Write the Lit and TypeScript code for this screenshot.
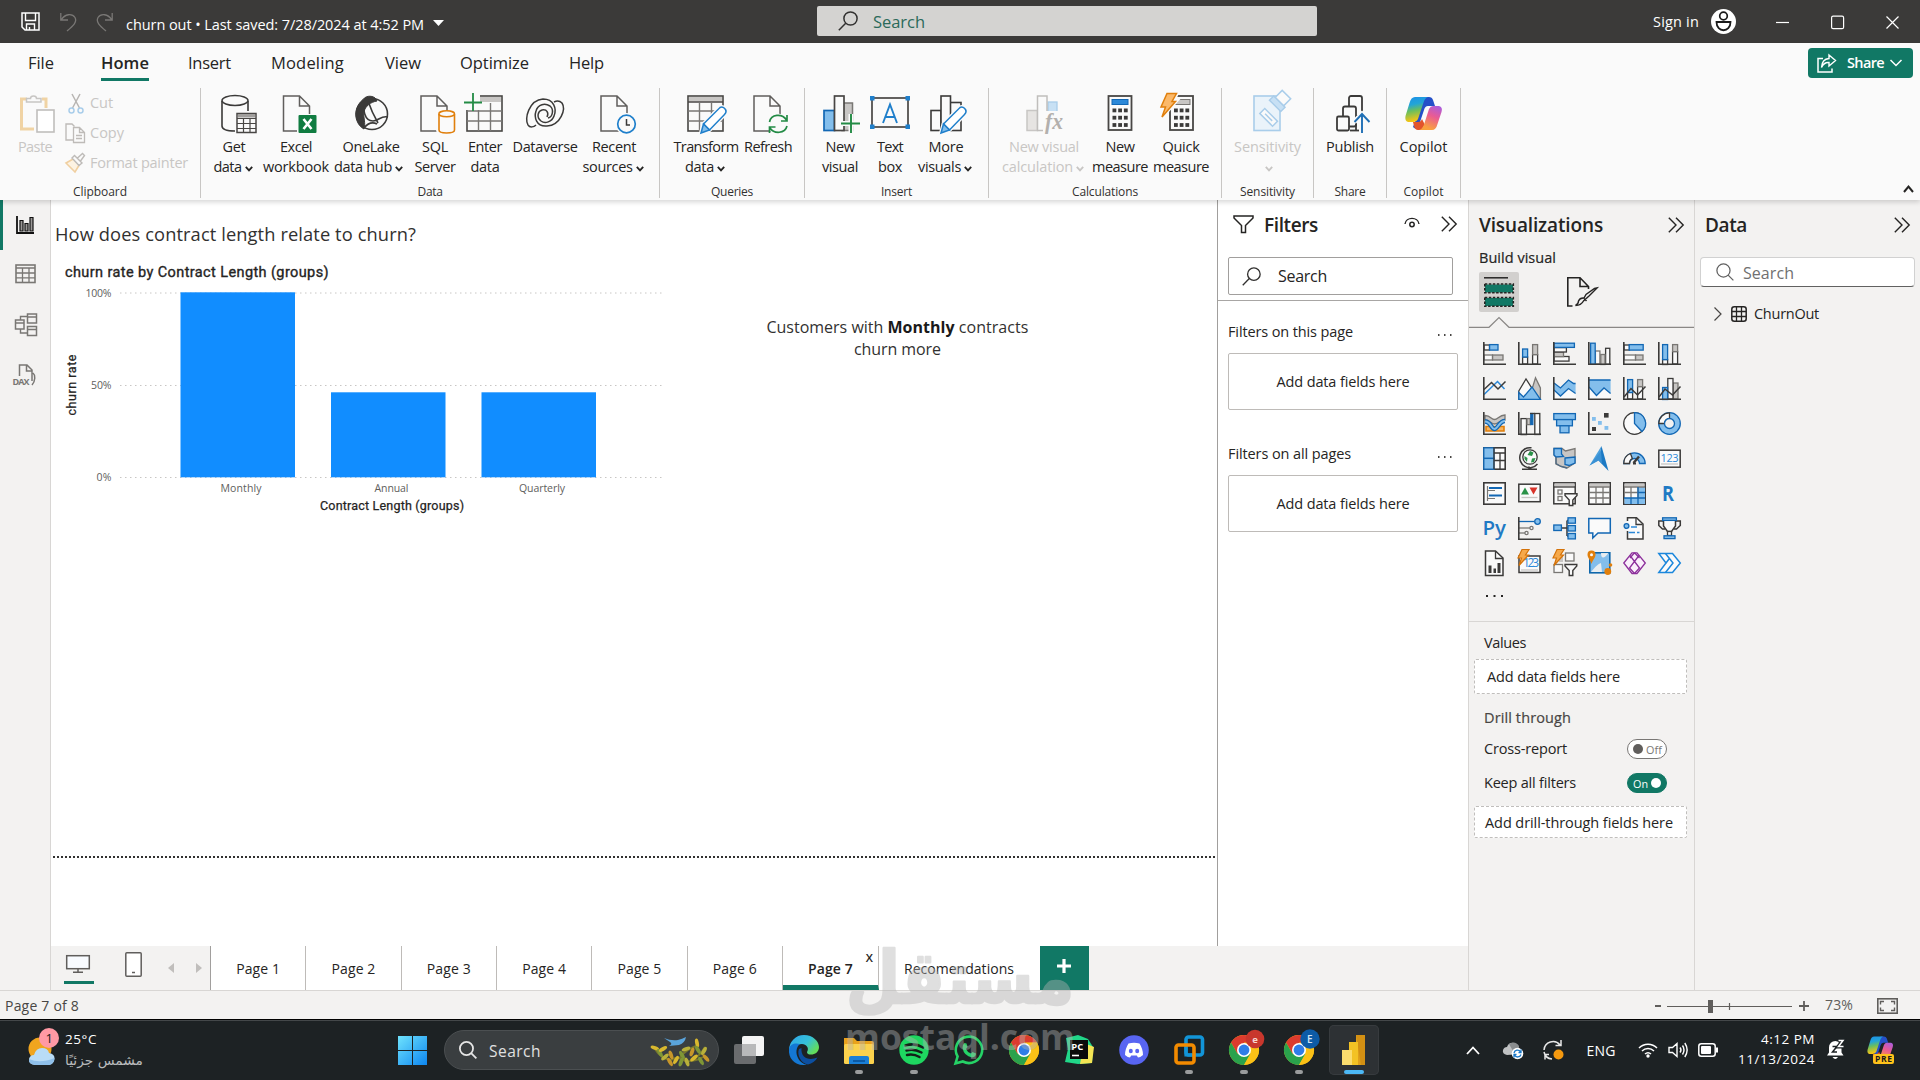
import { LitElement, html, svg, css, nothing } from "lit";
import { customElement, property } from "lit/decorators.js";

/** One line of text whose tracking is adjusted so that it fills a given width. */
@customElement("fit-text")
class FitText extends LitElement {
  @property({ type: Number }) w = 0;
  static styles = css`
    :host { display: inline-block; white-space: pre; }
  `;
  render() {
    return html`<slot></slot>`;
  }
  firstUpdated() {
    const n = (this.textContent ?? "").length;
    if (!this.w || !n) return;
    const natural = this.getBoundingClientRect().width;
    this.style.letterSpacing = `${((this.w - natural) / n).toFixed(3)}px`;
  }
}

const B = "#1267b4", b = "#83beec", D = "#3b3a39", G = "#797774", g = "#c8c6c4", W = "#fafafa", O = "#e07f0c";

const r = (x: number, y: number, w: number, h: number, fill = "none", stroke = "none", sw = 1.3) =>
  svg`<rect x=${x} y=${y} width=${w} height=${h} fill=${fill} stroke=${stroke} stroke-width=${sw} />`;
const p = (d: string, stroke = D, fill = "none", sw = 1.3) =>
  svg`<path d=${d} fill=${fill} stroke=${stroke} stroke-width=${sw} />`;
const c = (x: number, y: number, rad: number, fill = "none", stroke = "none", sw = 1.3) =>
  svg`<circle cx=${x} cy=${y} r=${rad} fill=${fill} stroke=${stroke} stroke-width=${sw} />`;
const icon = (w: number, h: number, body: unknown, cls = "") =>
  html`<svg class="ic ${cls}" width=${w} height=${h} viewBox="0 0 ${w} ${h}">${body}</svg>`;

const t = (text: string, w = 0, cls = "") => html`<fit-text class=${cls} .w=${w}>${text}</fit-text>`;

const axis = p("M.8 0V22.2H23", D, "none", 1.6);

/* ---------- visual gallery, 23 x 23 each ---------- */
const bolt = () => svg`<path d="M4 -2.500H11L7.500 3H10.500L1 13.500L3.500 6H0Z" fill="#f6a94a" stroke="#d4730a" stroke-width="1.200"/>`;
const visuals = [
  svg`${r(1, 3, 5.5, 5, W, D)}${r(6.6, 2.6, 8.4, 5.5, b, B)}${r(1, 13, 8.5, 5, W, G)}${r(9.6, 13, 10.4, 5, g, G)}${axis}`,
  svg`${r(4.6, 15, 5, 7, W, D)}${r(4.6, 7, 5, 8, b, B)}${r(14.6, 12.5, 5, 9.5, W, D)}${r(14.6, 2.6, 5, 10, g, G)}${axis}`,
  svg`${r(1, 14.5, 15, 4.6, W, D)}${r(1, 10, 9.5, 4.6, g, G)}${r(1, 5.6, 12.4, 4.4, W, D)}${r(1, 1.2, 20.4, 4.2, b, B)}${axis}`,
  svg`${r(17.6, 6.3, 4.2, 16, W, D)}${r(12.8, 12.5, 4.2, 10, g, G)}${r(7.4, 9, 4.5, 13, W, G)}${r(2.6, 1.2, 4.6, 21, b, B)}${axis}`,
  svg`${r(1, 3, 5.5, 5, W, D)}${r(6.2, 2.6, 14, 5.5, b, B)}${r(1, 13, 11.5, 5, W, G)}${r(12.6, 13, 7.4, 5, g, G)}${axis}`,
  svg`${r(4.6, 17.5, 5, 5, W, D)}${r(4.6, 2.6, 5, 15, b, B)}${r(14.6, 9.5, 5, 12.5, W, D)}${r(14.6, 2.6, 5, 7, g, G)}${axis}`,
  svg`${p("M1 17.500L14.500 4.500L21.500 12", "#2b88d8", "none", 1.5)}${p("M1 12.500L8.500 5.500L15 12L22.500 4.500", D, "none", 1.5)}${axis}`,
  svg`${p("M11 22L17.500 0.800L22.400 11V22Z", G, g)}${p("M.8 14L8 2L15 13L8 22H.8Z", D, W)}${p("M.8 15.500L5.500 20L14 10L22.400 22.300H.8Z", B, b)}`,
  svg`<path d="M1 22V14L7.500 19L16 12L22.500 16V22Z" fill="#fafafa"/>${p("M1 6L7.500 11L15.500 3L22.600 7V16L15.500 11.500L7.500 19L1 13Z", "none", b)}${p("M1 6L7.500 11L15.500 3L20.500 6.500H22.600M1 13L7.500 19L15.500 11.500L22.600 16.500", B)}${axis}`,
  svg`<path d="M1 22V8L8.500 18L16 11L22.500 16V22Z" fill="#fafafa"/>${p("M1 3H22.600V16L16 11L8.500 18.500L1 10Z", "none", b)}${p("M1 3H22.600M1 10L8.500 18.500L16 11L22.600 16.500", B)}${axis}`,
  svg`${r(4.6, 15, 5, 7, W, D)}${r(4.6, 2.6, 5, 13, b, B)}${r(14.6, 9.5, 5, 12.5, W, D)}${r(14.6, 2.6, 5, 7, g, G)}${p("M1 20L8 11.500L14.500 18L22.500 9.500", D, "none", 1.5)}${axis}`,
  svg`${r(15, 6, 5, 16, g, G)}${r(9.8, 1.5, 5.2, 20.5, W, D)}${r(4.6, 10.5, 5, 12, b, B)}${p("M1 20L7 12L14.500 18L22.500 9.500", D, "none", 1.5)}${axis}`,
  svg`${p("M3 14.500H21V19H3Z", O, "#f7b35e", 1.6)}${p("M2 3.500C8 3.500 8 7.500 11.500 7.500S16 3 22 3V8C17 8 15 12 11.500 12S7 8 2 8Z", G, g)}${p("M2 9.500C8 9.500 8 17 11.500 17S16 9 22 9", B, "none", 4.5)}${p("M2 9.500C8 9.500 8 17 11.500 17S16 9 22 9", b, "none", 2)}${axis}`,
  svg`${r(3, 6.6, 5.5, 16, W, D)}${r(9, 6.6, 3.2, 6, g, G)}${r(12.8, 1.5, 2, 11, B, B)}${r(16.8, 1.5, 5, 21, W, D)}${p("M12 1.500H17", D)}${axis}`,
  svg`${r(0.8, 1.6, 21.6, 6, b, B)}${r(3.6, 7.6, 15.8, 6.2, b, B)}${r(7, 13.8, 9, 7, b, B)}`,
  svg`${r(16, 1, 4.6, 4.6, D)}${r(4, 5, 3.8, 3.8, b)}${r(10, 9, 3.8, 3.8, b)}${r(16.5, 14, 3.8, 3.8, b)}${r(4, 15, 4, 4, D)}${axis}`,
  svg`${c(11.5, 11.5, 10.8, W, D)}${p("M11.500 11.500V.7A10.800 10.800 0 0 1 19 19.500Z", B, b)}`,
  svg`${c(11.5, 11.5, 10.8, b, B)}${p("M.8 11.500A10.800 10.800 0 0 1 11.500 .8V6.500A5 5 0 0 0 6.500 11.500Z", D, W)}${c(11.5, 11.5, 5, "#f3f2f1", B)}`,
  svg`${r(0.8, 0.8, 21.4, 21.4, W, D, 1.6)}${r(0.8, 0.8, 10.2, 10.6, b, B)}${r(0.8, 11.4, 10.2, 10.8, b, B)}${p("M11 6H22M17 6V22M11 13.500H17M17 13.500H22M11 0V22", D)}`,
  svg`${p("M13.500 .8A10 10 0 1 0 19.500 17M11 19.500V22M4 22.200H19", D, "none", 1.5)}${c(12, 10, 7.2, W, D)}<path d="M12 4L15.500 5.500L14 9L9.500 8ZM6.500 9L9.500 11L9 15L6.500 12ZM14 11.500L17.500 11L16 15L13 15.500Z" fill="#2a9248"/>`,
  svg`${p("M1 1.500H9L12.500 4L22 1.500V16L14 21L8 19.500L3 17V10L1 8Z", G, g)}${p("M1 1.500H8.500V7L10.500 9.500L3 10L1 8Z", B, b)}${p("M12 11L22 10V16L16 18.500L12 17.500Z", B, b)}${p("M3 10V16.500L8 19.500L14 21", "#4f6c86")}`,
  svg`<path d="M13.500 -1L1.500 18.500L10.500 13.500Z" fill="#4ba0dd"/><path d="M13.500 -1L20.500 24L10.500 13.500Z" fill="#1b79c4"/><path d="M1.500 18.500L10.500 13.500L14 16.500L13 4Z" fill="#3a91d4"/>`,
  svg`${p("M.8 16.500A10.700 10.700 0 0 1 22.200 16.500H16.500A5 5 0 0 0 6.500 16.500Z", B, b)}${p("M.8 16.500A10.700 10.700 0 0 1 7.500 6.500L9.300 11.500A5.500 5.500 0 0 0 6.500 16.500Z", D, W)}${p("M10.500 16L16 9.500", D, "none", 2.4)}${p("M10 16.500H13", D, "none", 2)}`,
  svg`${r(0.8, 3.2, 21.4, 17, W, D, 1.5)}<text x="2.600" y="14.500" font-size="11" font-weight="500" textLength="18" class="num">123</text>${p("M3 17H20", g)}`,
  svg`${r(0.8, 0.8, 21.4, 21.4, W, D, 1.6)}${p("M4.500 4V19M5 8.500H12M5 16.500H12", G, "none", 1.2)}${p("M6 6H19M6 13.500H19", B, "none", 2)}`,
  svg`${r(0.8, 2.2, 21.4, 17.5, W, D, 1.5)}<path d="M3 12.500L7 5.500L11 12.500Z" fill="#2a9248"/><path d="M11.500 5.500H19.500L15.500 12.500Z" fill="#d9342b"/>${p("M3.500 15.500H19.500", g)}`,
  svg`${r(0.8, 0.8, 21.4, 21, W, D, 1.5)}${r(1.5, 1.5, 20, 3, g)}${p("M1 5H22", D)}${r(5, 8, 4, 4, W, G)}${r(5, 14.5, 4, 4, W, G)}${p("M12 11.800H24V13.500L19.800 18V23.500H16.200V18L12 13.500Z", D, W, 1.4)}`,
  svg`${r(0.8, 0.8, 21.4, 21.4, W, D, 1.6)}${r(1.5, 1.5, 20, 3, g)}${p("M1 5H22M1 10.500H22M1 16H22M8 5V22M15 5V22", G)}`,
  svg`${r(0.8, 0.8, 21.4, 21.4, W, D, 1.6)}${r(1.5, 1.5, 20, 3, g)}${r(15, 5, 7, 17, b)}${r(1.5, 16, 20.5, 6, b)}${p("M1 5H22M1 10.500H15M8 5V16M15 5V16", G)}${p("M15 10.500H22M1 16H22M15 16V22M15 5V16M8 16V22", B)}`,
  svg`<text x="4" y="19" font-size="21" font-weight="700" textLength="12" lengthAdjust="spacingAndGlyphs" class="lang">R</text>`,
  svg`<text x="-0.500" y="18" font-size="20.500" font-weight="600" textLength="23.500" lengthAdjust="spacingAndGlyphs" class="lang">Py</text>`,
  svg`${p("M1 4.500H16", B)}${c(19.5, 4.5, 2.8, b, B)}${p("M1 11H12", G)}${c(13.5, 11, 1.6, W, G)}${p("M1 16H7", G)}${c(8.5, 16, 1.6, W, G)}${axis}`,
  svg`${p("M8 11H14M14 3.500V19M14 3.500H16M14 11H16M14 19H16", D, "none", 1.5)}${r(0.8, 8, 7.6, 5.5, b, B)}${r(15, 0.8, 7.4, 5.4, b, B)}${r(15, 8.6, 7.4, 5.4, b, B)}${r(15, 16.5, 7.4, 5.4, b, B)}`,
  svg`${p("M.8 1.500H22.300V16H10L4.800 21V16H.8Z", B, W, 1.5)}`,
  svg`${p("M4.500 4V.8H13.500L20 7V22H4.500V14", D, W, 1.5)}${p("M13 1V7.500H19.500", D)}${c(3.5, 9, 2.4, b, B)}${p("M8 10H14M5.500 15.500H12M14 15.500H16.500", "#2b88d8")}`,
  svg`${p("M5 4H.8V8.500L4.500 12H7M18 4H22.300V8.500L18.500 12H16", D, "none", 1.5)}${p("M5.500 3V9L9.500 14.500H13.500L17.500 9V3", D, W, 1.5)}${r(4.6, 0.8, 13.8, 2.6, b, B)}${r(9.5, 14.5, 4, 4, W, D)}${r(6, 18.8, 11, 2.8, b, B)}`,
  svg`${p("M2.500 -1H12.500L20 6V23.500H2.500Z", D, W, 1.5)}${p("M12.500 -1V6.500H20", D)}<path d="M5.500 13.500h3v7.500h-3zM10.500 16.500h2.500v4.500h-2.500zM14.500 11h3v10h-3z" fill="#3b3a39"/>`,
  svg`${r(1, 4, 21, 16.5, W, D, 1.5)}<text x="5" y="15" font-size="12" textLength="16" class="num">123</text>${p("M3 18H20", g)}${bolt()}`,
  svg`${r(12.5, 1, 8.5, 8, W, G)}${r(1, 12.5, 8.5, 8, W, G)}${r(6, 3, 4, 7, g)}${p("M12 12.500H23.800V14L19.800 18.500V23.500H16.200V18.500L12 14Z", D, W, 1.4)}${bolt()}`,
  svg`${r(1.8, 0.8, 20, 20, b, "#0f67ab", 1.6)}<path d="M13 1C13 8 17 6 20.500 1ZM3 20C8 14 10 12 13 11L14 20Z" fill="#f3f2f1" opacity=".9"/>${p("M-.5 2.500A4 4 0 0 1 7.500 2.500C7.500 6 5 7 3.500 12C2 7 -.5 6 -.5 2.500Z", "none", O)}${c(3.5, 2.8, 1.5, W)}${c(19.8, 19.5, 3.4, O)}${c(22.5, 13, 1.8, O)}`,
  svg`<g fill="none" stroke="#8c2f9b" stroke-width="1.300"><path d="M.8 11L9 .8H14L22.300 11L14 21.500H9Z" fill="#faf0fb"/><path d="M7 3.500L16.500 16L11.500 21.500M16 3.500L6.500 16L11.500 21.500M11.500 .8L16.500 6M11.500 .8L7 6"/></g>`,
  svg`${p("M.8 1.500H14.500L22.300 11L14.500 20.500H.8L8 11Z", "#1b87dc", W, 1.5)}${p("M7.500 1.500L15 11L7.500 20.500M8 11L11 7", "#1b87dc", "none", 1.5)}`,
];

/* ---------- ribbon icons, 40 x 40 each ---------- */
const page = (x: number, w = 26) =>
  p(`M${x} 3H${x + w - 10}L${x + w} 13V38H${x}ZM${x + w - 10} 3V13H${x + w}`, "#605e5c", W, 1.5);
const pencil = (x: number, y: number) => svg`<g transform="translate(${x} ${y})"><path d="M0 26L2.500 17L19 .5Q22 -1 24.500 2.500Q26 5 23.500 7.500L8.500 23Z" fill="#fff" stroke="#fafafa" stroke-width="4"/><path d="M2.500 17L19 .5Q22 -1 24.500 2.500Q26 5 23.500 7.500L8.500 23Z" fill="#fff" stroke="#1f7fcb" stroke-width="1.500"/><path d="M0 26L2.500 17L8.500 23Z" fill="#83beec" stroke="#1f7fcb" stroke-width="1.500"/></g>`;
const calcBody = (x: number) => svg`${r(x, 3, 23, 34, W, "#484644", 1.8)}${[0, 1, 2].map((i) => [0, 1, 2].map((j) => r(x + 4 + j * 5.7, 15.5 + i * 7.3, 3.8, 3.8, "#3b3a39")))}`;
const copilot = (id: string) => svg`
  <defs>
    <linearGradient id="${id}a" x1="0" y1="0" x2="0.200" y2="1"><stop offset="0" stop-color="#1c8fe8"/><stop offset=".35" stop-color="#22a5d8"/><stop offset=".6" stop-color="#6cbf5c"/><stop offset="1" stop-color="#fbc512"/></linearGradient>
    <linearGradient id="${id}b" x1="1" y1="0" x2="0.600" y2="1"><stop offset="0" stop-color="#a25de6"/><stop offset=".5" stop-color="#ea5b93"/><stop offset="1" stop-color="#f9a13f"/></linearGradient>
  </defs>
  <path d="M20 2H25Q28 2 29 5L31 11H24Q21 11 20 15L15 30Q13 36 9 32Z" fill="#2450c8"/>
  <path d="M11 2H24Q20.500 3 19 9L14 24Q12.500 27 9 27H4Q.5 26 1.500 21L5.500 8Q7 2 11 2Z" fill="url(#${id}a)"/>
  <path d="M9 27H14Q17 27 18 24L21 30L17 35H14Q11 35 10 31Z" fill="#e2542c"/>
  <path d="M28 35H15Q19 34 20.500 28L25 14Q26.500 11 29 11H35Q39 12 37.500 17L33.500 29Q32 35 28 35Z" fill="url(#${id}b)"/>`;

const ri: Record<string, unknown> = {
  get: svg`${p("M8 8V33C8 36 13 38 21 38M34 8V18", D, "none", 1.6)}<ellipse cx="21" cy="7.500" rx="13" ry="5" fill="#fafafa" stroke="#3b3a39" stroke-width="1.500"/>${r(23, 20.5, 19, 19, W, "#484644", 1.5)}${r(24, 21, 17, 3.5, "#a19f9d")}${p("M23 25.500H42M23 30.500H42M23 35.500H42M29.500 25V39M36 25V39", "#484644", "none", 1.2)}`,
  excel: svg`${page(7.5)}<rect x="21" y="21" width="20" height="20" fill="#fafafa"/><rect x="22.500" y="22" width="18" height="18" rx="1" fill="#107c41"/><path d="M27.500 26L35.500 36M35.500 26L27.500 36" stroke="#fff" stroke-width="2.600"/>`,
  lake: svg`${p("M12 6.500C4 13 3 23 7 30C9 34 13 36 13 36C15 30 12 24 13 19C14 13 20 9 26 8C25 3 16 1 12 6.500Z", D, D, 1)}${c(21, 21, 15.5, "none", D, 1.6)}${p("M16 8C10 16 14 28 22 28C28 28 30 22 37 24M17 8C20 17 23 23 27 30M13 35C17 30 22 29 26 31", D, "none", 1.6)}`,
  sql: svg`${page(6)}<path d="M23 21V37C23 39 26 40 30.500 40S39 39 39 37V21" fill="#fafafa" stroke="#fafafa" stroke-width="4"/><path d="M24 21V37C24 39 27 40 31.500 40S39.500 39 39.500 37V21" fill="#fafafa" stroke="#e07f0c" stroke-width="1.600"/><ellipse cx="31.700" cy="20.800" rx="7.800" ry="3" fill="#fafafa" stroke="#e07f0c" stroke-width="1.500"/>`,
  enter: svg`${r(2, 3, 35, 35, W, "#484644", 1.6)}${r(3, 4, 33, 5, "#c8c6c4")}${p("M2 18H37M2 28H37M13.500 10V38M25.500 10V38", "#797774", "none", 1.4)}<rect x="-2" y="-1" width="17" height="18" fill="#fafafa"/>${p("M8 0V18M-1 9.500H17", "#238b45", "none", 1.8)}`,
  dataverse: svg`${p("M3 32C-1 26 4 7 18 6C29 6 32 16 29 23C27 29 20 31 16 28C11 24 13 18 17 17C22 16 24 20 22 24", D, "none", 1.5)}${p("M37 10C41 16 36 32 22 33C11 34 9 24 11 18C13 11 20 10 25 13C29 16 28 24 23 25M37 10C34 7 31 8 29 9M3 32C5 35 9 34 11 32", D, "none", 1.5)}`,
  recent: svg`${page(7)}<circle cx="32.500" cy="31" r="11" fill="#fafafa"/>${c(32.5, 31, 8.8, W, "#1f7fcb", 1.7)}${p("M32.500 26V32H36", D, "none", 1.5)}`,
  transform: svg`${r(2, 3, 35, 35, W, "#484644", 1.6)}${r(3, 4, 33, 4.5, "#c8c6c4")}${p("M2 9H37", "#484644")}${p("M2 18H37M2 28H37M13.500 10V38M25.500 10V38", "#797774", "none", 1.4)}${pencil(15, 14)}`,
  refresh: svg`${page(6)}<circle cx="30" cy="31" r="10.500" fill="#fafafa"/>${p("M21.500 29C23 21 34 20 38.500 27M39 22V28H33M39 33C37 41 26 41 22 35M21.500 40V34H27.500", "#238b45", "none", 1.7)}`,
  newvisual: svg`${r(22, 10, 10.5, 27.5, "#c8c6c4", "#797774", 1.5)}${r(4, 17.5, 10.5, 20, "#83beec", "#1267b4", 1.7)}${r(14.5, 3, 9.5, 34.5, W, "#484644", 1.7)}<path d="M31 21V40M21 30.500H40" stroke="#fafafa" stroke-width="5"/>${p("M31 21V40M21 30.500H40", "#238b45", "none", 1.9)}`,
  textbox: svg`${r(2, 5, 36, 29, W, "#484644", 1.7)}${p("M13 30L20 11.500L27 30M15.500 24H24.500", "#1f7fcb", "none", 1.9)}${r(0, 3, 4.5, 4.5, "#1f7fcb")}${r(35.5, 3, 4.5, 4.5, "#1f7fcb")}${r(0, 31.5, 4.5, 4.5, "#1f7fcb")}${r(35.5, 31.5, 4.5, 4.5, "#1f7fcb")}`,
  morevisuals: svg`${r(23, 9.5, 12, 28, W, D, 1.6)}${r(5, 17.5, 10, 20, W, D, 1.6)}${r(15, 3, 9.5, 34.5, W, D, 1.6)}${pencil(15, 14)}`,
  viscalc: svg`${r(3, 17.5, 10.5, 20, "#e6e4e2", "#c8c6c4", 1.5)}${r(24, 9, 9, 10, "#c7e0f4", "#a9cdea", 1.3)}${r(13.5, 3, 9.5, 34.5, W, "#c0bebc", 1.5)}<rect x="19" y="18" width="20" height="22" fill="#fafafa"/><text x="21" y="36" font-size="24" class="fx" textLength="18" lengthAdjust="spacingAndGlyphs">fx</text>`,
  measure: svg`${calcBody(8.5)}${r(12, 6.5, 16, 5, "#2b88d8", "#1267b4", 1)}`,
  quick: svg`${calcBody(9)}${r(13, 6.5, 16, 5, "#c8c6c4", "#797774", 1)}<path d="M6 0H16L12 8H15L0 25L4 14H-1Z" fill="#f8b45c" stroke="#fafafa" stroke-width="4"/><path d="M6 0.500H15.500L11 8.500H14.500L1 24L4.500 14H0Z" fill="#fbb96a" stroke="#e07f0c" stroke-width="1.500"/>`,
  sensitivity: svg`${r(6, 3, 26, 34.5, "#eaf3fa", "#a9cdea", 1.6)}<g transform="rotate(45 25 15)" stroke="#a9cdea" fill="#fafafa" stroke-width="1.500"><rect x="19" y="-4" width="12" height="10"/><rect x="17" y="6" width="16" height="6" fill="#c7e0f4"/></g><g transform="rotate(-45 21 24)" stroke="#a9cdea" fill="#fafafa" stroke-width="1.500"><rect x="17" y="15" width="7" height="18"/><path d="M20.500 19V29"/></g>`,
  publish: svg`<g fill="#fafafa" stroke="#3b3a39" stroke-width="1.800"><rect x="19" y="3" width="13" height="20" rx="2"/><rect x="13" y="13.500" width="13" height="20" rx="2"/><path d="M26 24V37.500"/><rect x="7" y="23.500" width="12" height="14" rx="1.500"/></g><path d="M20 37.500H29" stroke="#3b3a39" stroke-width="1.800"/><path d="M32 21V40M24 29L32 21L40 29" stroke="#fafafa" stroke-width="5" fill="none"/>${p("M32 40V21.500M24.500 29L32 21L39.500 29", "#1f6fb5", "none", 1.9)}`,
  copilot: svg`<g transform="translate(0 2)">${copilot("r")}</g>`,
};

type Item = { k: string; w: number; l: [string, number][]; more?: boolean; off?: boolean };
const groups: { name: string; nw: number; w: number; items: Item[] }[] = [
  { name: "Data", nw: 25, w: 458, items: [
    { k: "get", w: 66, l: [["Get", 23], ["data", 28]], more: true },
    { k: "excel", w: 58, l: [["Excel", 32], ["workbook", 66]] },
    { k: "lake", w: 92, l: [["OneLake", 57], ["data hub", 58]], more: true },
    { k: "sql", w: 36, l: [["SQL", 26], ["Server", 41]] },
    { k: "enter", w: 64, l: [["Enter", 34], ["data", 29]] },
    { k: "dataverse", w: 56, l: [["Dataverse", 65]] },
    { k: "recent", w: 82, l: [["Recent", 44], ["sources", 50]], more: true } ] },
  { name: "Queries", nw: 42, w: 144, items: [
    { k: "transform", w: 92, l: [["Transform", 65], ["data", 29]], more: true },
    { k: "refresh", w: 32, l: [["Refresh", 48]] } ] },
  { name: "Insert", nw: 31, w: 183, items: [
    { k: "newvisual", w: 70, l: [["New", 29], ["visual", 36]] },
    { k: "textbox", w: 30, l: [["Text", 26], ["box", 24]] },
    { k: "morevisuals", w: 82, l: [["More", 35], ["visuals", 43]], more: true } ] },
  { name: "Calculations", nw: 66, w: 232, items: [
    { k: "viscalc", w: 110, l: [["New visual", 70], ["calculation", 71]], more: true, off: true },
    { k: "measure", w: 42, l: [["New", 29], ["measure", 56]] },
    { k: "quick", w: 80, l: [["Quick", 37], ["measure", 56]] } ] },
  { name: "Sensitivity", nw: 55, w: 91, items: [{ k: "sensitivity", w: 91, l: [["Sensitivity", 67], ["", 0]], more: true, off: true }] },
  { name: "Share", nw: 31, w: 72, items: [{ k: "publish", w: 72, l: [["Publish", 48]] }] },
  { name: "Copilot", nw: 40, w: 73, items: [{ k: "copilot", w: 73, l: [["Copilot", 48]] }] },
];

const chev = () => html`<svg class="chev" width="8" height="6" viewBox="0 0 8 6"><path d="M.8 .8L4 4.400L7.200 .8" fill="none" stroke="currentColor" stroke-width="1.800"/></svg>`;
const dblChev = () => icon(16, 16, p("M.8 .8L8 8L.8 15.200M8 .8L15.200 8L8 15.200", "#252423", "none", 1.4));
const lens = (w: number, color: string, sw = 1.5) => html`<svg class="ic" width=${w} height=${w} viewBox="0 0 20 20"><circle cx="12.500" cy="7.500" r="6.600" fill="none" stroke=${color} stroke-width=${sw} /><path d="M7.700 12.200L.8 19.200" stroke=${color} stroke-width=${sw} /></svg>`;
const lensR = (w: number, color: string, sw = 1.5) => html`<svg class="ic" width=${w} height=${w} viewBox="0 0 20 20"><circle cx="8.300" cy="8.300" r="7.300" fill="none" stroke=${color} stroke-width=${sw} /><path d="M13.500 13.500L19.300 19.300" stroke=${color} stroke-width=${sw} /></svg>`;

/* ---------- taskbar icons, 30 x 30 each ---------- */
const chrome = svg`
  <circle cx="15" cy="15" r="15" fill="#fbc116"/>
  <path d="M15 15L8.500 18.700L2 7.500A15 15 0 0 1 28 7.500H15Z" fill="#dc3b2e"/>
  <path d="M2 7.500A15 15 0 0 0 15 30L21.500 18.700L15 15L8.500 18.700Z" fill="#2aa24c"/>
  <path d="M28 7.500A15 15 0 0 1 15 30L21.500 18.700L15 8Z" fill="#fbc116"/>
  <circle cx="15" cy="15" r="7" fill="#fff"/><circle cx="15" cy="15" r="5.400" fill="#2f7de9"/>`;
const apps: { i: unknown; run?: boolean; on?: boolean }[] = [
  { i: svg`<rect x="0" y="9" width="22" height="20" rx="2" fill="#6a6c6e"/><rect x="8" y="1" width="22" height="20" rx="2" fill="#f4f4f4"/><rect x="8" y="9" width="14" height="12" fill="#b8b9ba"/>` },
  { i: svg`<defs><linearGradient id="e1" x1="0" y1="0" x2="1" y2=".6"><stop offset="0" stop-color="#2fa4ec"/><stop offset=".6" stop-color="#35c1d8"/><stop offset="1" stop-color="#63dd5b"/></linearGradient></defs>
      <path d="M0 15A15 15 0 0 1 15 0C24 0 30 6.500 30 12C30 17 26 19.500 22 19.500C18 19.500 17.500 17.500 18.500 16C20 13 17.500 9 13 9C7 9 0 12 0 18Z" fill="url(#e1)"/>
      <path d="M0 14C1 9 6 7.500 11 9C7 12 6.500 18 9 23C11 27 15 29.500 18 29.700C7 32 -1 24 0 14Z" fill="#1478d4"/>
      <path d="M10 14C7.500 20 12 28.500 19 29.400C23 28.500 26.500 26 28.500 22.500C20 26 11.500 23 12.500 13Z" fill="#0c4fa0"/>` },
  { i: svg`<path d="M0 3H10L13 6H28Q30 6 30 8V27H0Z" fill="#e9a21c"/><rect x="0" y="9" width="30" height="20" rx="1.500" fill="#fbd24d"/><path d="M5 29V23Q5 21 7 21H23Q25 21 25 23V29Z" fill="#1a7fd6"/><path d="M9 25H21V27H9Z" fill="#0b5aa5"/>`, run: true },
  { i: svg`<circle cx="15" cy="15" r="14.700" fill="#1ed760"/><path d="M6.500 10.500Q16 7.500 24 12.500M7.500 15.500Q15 13.500 22.500 17.500M8 20Q14.500 18.500 20.500 22" stroke="#122018" stroke-width="2.500" fill="none" stroke-linecap="round"/>`, run: true },
  { i: svg`<path d="M1.500 28.500L3.600 21.500A13.200 13.200 0 1 1 8.800 26.500Z" fill="none" stroke="#25d366" stroke-width="2.600"/><path d="M10.500 8L12.500 8.500L13.500 12L12 14Q13.500 17.500 17 18.500L18.500 17L22 18.500Q22 22 18 22.500Q10 21 8.500 13Q8.500 9.500 10.500 8Z" fill="#25d366"/>` },
  { i: chrome },
  { i: svg`<path d="M2 3L14 0L24 4L29 12L28 28L14 29L1 27L4 14Z" fill="#21d789"/><path d="M20 8L30 12L28 28L16 29Z" fill="#f4e554"/><rect x="6" y="5" width="18" height="19" fill="#0a0a0a"/><text x="7.200" y="14.500" font-size="9.500" font-weight="700" fill="#fff" class="sans">PC</text><path d="M8 20.500H15" stroke="#fff" stroke-width="1.600"/>` },
  { i: svg`<circle cx="15" cy="15" r="14.800" fill="#5865f2"/><path d="M9.500 8.500Q15 7 20.500 8.500Q24 14 24 20Q21 22.500 19 22.500L17.800 20.500H12.200L11 22.500Q9 22.500 6 20Q6 14 9.500 8.500Z" fill="#fff"/><ellipse cx="11.800" cy="16" rx="2" ry="2.200" fill="#5865f2"/><ellipse cx="18.200" cy="16" rx="2" ry="2.200" fill="#5865f2"/>` },
  { i: svg`<rect x="12" y="2" width="16.500" height="18" rx="2.500" fill="none" stroke="#1295d8" stroke-width="3.600"/><rect x="2" y="10" width="18" height="18" rx="2.500" fill="none" stroke="#f38b00" stroke-width="3.600"/><path d="M12 12V20H18" fill="none" stroke="#1295d8" stroke-width="3.200"/>`, run: true },
  { i: svg`${chrome}<circle cx="26" cy="4" r="9.300" fill="#c8372d"/><text x="23.300" y="7.500" font-size="9.500" font-weight="700" fill="#f7d6d2" class="sans">e</text>`, run: true },
  { i: svg`${chrome}<circle cx="26" cy="4" r="9.700" fill="#0d5ba6"/><text x="23" y="7.700" font-size="10" font-weight="600" fill="#d5e6f5" class="sans">E</text>`, run: true },
  { i: svg`<path d="M17 0H26V30H17Z" fill="#e0a01b"/><path d="M17 0H26V30H22Z" fill="#c9860f" opacity=".6"/><path d="M10 7H19V30H10Z" fill="#f3c224"/><path d="M3 15H13V30H3Z" fill="#fbdc6e"/>`, on: true },
];

@customElement("app-root")
class AppRoot extends LitElement {
  static styles = css`
    :host { display: flex; flex-direction: column; width: 1920px; height: 1080px; overflow: hidden; position: relative;
      background: #f3f2f1; color: #252423; font: 14.5px/20px "Open Sans", "Noto Sans", sans-serif; }
    * { box-sizing: border-box; }
    svg { display: block; overflow: visible; flex: none; }
    fit-text { flex: none; }
    .row { display: flex; align-items: center; }

    .title { height: 43px; flex: none; background: #3b3a39; color: #fff; display: flex; align-items: center; padding-left: 21px; }
    .title .undo { margin-left: 20px; }
    .title .redo { margin-left: 19px; }
    .title .name { margin-left: 13px; padding-top: 6px; }
    .title .tri { margin: 3px 0 0 9px; }
    .topsearch { margin-left: 373px; width: 500px; height: 30px; margin-top: -1px; border-radius: 2px; background: #d4d3d1; color: #2b6a5a;
      display: flex; align-items: center; padding-left: 21px; font-size: 16.500px; gap: 15px; }
    .topsearch fit-text { padding-top: 1px; }
    .signin { margin-left: 336px; }
    .title .user { margin-left: 12px; }
    .title .min { margin-left: 40px; }
    .title .max { margin-left: 42px; }
    .title .close { margin-left: 42px; }

    .ribbon { height: 157px; flex: none; background: #fafafa; position: relative; z-index: 2; box-shadow: 0 2px 5px rgba(0,0,0,.17); }
    .menu { height: 42px; display: flex; padding-left: 28px; font-size: 16.500px; position: relative; }
    .menu .tab { height: 38px; padding-top: 10px; border-bottom: 3px solid transparent; flex: none; }
    .menu .tab.cur { border-color: #117865; font-weight: 600; }
    .tab:nth-child(2) { margin-left: 47px; } .tab:nth-child(3) { margin-left: 39px; } .tab:nth-child(4) { margin-left: 40px; }
    .tab:nth-child(5) { margin-left: 41px; } .tab:nth-child(6) { margin-left: 39px; } .tab:nth-child(7) { margin-left: 40px; }
    .share { margin: 5px 7px 0 auto; width: 105px; height: 30px; background: #117865; border-radius: 4px; color: #fff; font-size: 14.500px;
      display: flex; align-items: center; padding-left: 9px; }
    .share fit-text { margin: 0 6px 0 11px; font-weight: 600; }
    .groups { display: flex; height: 115px; }
    .group { display: flex; flex-direction: column; flex: none; padding-top: 8px; }
    .group .items { display: flex; height: 90px; }
    .group .gname { display: flex; justify-content: center; font-size: 12px; line-height: 18px; color: #323130; height: 17px; }
    .sep { width: 1px; background: #c8c6c4; margin: 3px 0 2px; flex: none; }
    .item { display: flex; flex-direction: column; align-items: center; flex: none; }
    .item .line { display: flex; align-items: center; white-space: nowrap; height: 20px; }
    .item .first { margin-top: 4px; }
    .item .drop { padding-right: 2px; }
    .item .drop.lake { padding-right: 5px; }
    .item.off, .off { color: #c8c6c4; }
    .chev { margin: 3px 0 0 3px; }
    .clip { width: 200px; }
    .clip .items { padding-left: 18px; color: #c8c6c4; }
    .clip .col { padding-left: 13px; display: flex; flex-direction: column; margin-top: -5px; }
    .clip .row { height: 30px; gap: 5px; }
    .collapse { margin: 100px 6px 0 auto; }
    .num { font-family: "Open Sans", sans-serif; fill: #2b88d8; }
    .lang { font-family: "Open Sans", sans-serif; fill: #1f7ac4; }
    .fx { font-family: "Liberation Serif", serif; font-style: italic; fill: #b3b0ad; font-weight: 700; }
    .sans { font-family: "Open Sans", sans-serif; }

    .body { display: flex; height: 790px; flex: none; }
    .rail { width: 51px; flex: none; border-right: 1px solid #d8d6d4; }
    .rail div { height: 50px; display: flex; align-items: center; padding-left: 14px; }
    .rail div:nth-child(2) { padding-bottom: 2px; }
    .rail .cur { border-left: 3px solid #117865; padding-left: 13px; }
    .rail .dax { font-size: 9px; font-weight: 700; fill: #797774; }
    .left { display: flex; flex-direction: column; width: 1417px; flex: none; }
    .upper { display: flex; height: 746px; }
    .canvas { width: 1166px; background: #fff; display: flex; flex-direction: column; }
    .canvas .cols { display: flex; height: 656px; }
    .report { width: 640px; flex: none; }
    .report h1 { margin: 22px 0 0 4px; font: 400 18.300px/24px "Open Sans", sans-serif; height: 24px; color: #323130; }
    .report h2 { margin: 17px 0 0 14px; font: 400 14.500px/20px Roboto, "Open Sans", sans-serif; height: 20px; -webkit-text-stroke: .35px #252423; }
    .chart { display: block; margin-top: -1px; }
    .chart .ax { font: 10.500px "Open Sans", sans-serif; fill: #605e5c; }
    .chart .at { font: 400 12.500px Roboto, sans-serif; fill: #252423; stroke: #252423; stroke-width: .25px; }
    .note { margin: 116px 0 0 26px; width: 361px; text-align: center; font-size: 16px; line-height: 22px; height: 44px; color: #323130; }
    .note b { color: #1a1a1a; }
    .note .l { display: flex; justify-content: center; }
    .pageend { height: 2px; margin: 0 1px 0 2px; background: repeating-linear-gradient(90deg, #323130 0 2px, #fff 2px 4px); }

    .filters { width: 251px; background: #fff; border-left: 1px solid #a19f9d; }
    .filters .head { height: 48px; padding: 0 12px 0 15px; display: flex; align-items: center; }
    h3 { margin: 0; font-weight: 600; font-size: 19px; line-height: 24px; display: flex; }
    .filters h3 { margin: 2px 86px 0 10px; }
    .filters .eye { margin-right: 21px; margin-top: -4px; }
    .fsearch { margin: 9px 0 0 10px; width: 225px; height: 38px; border: 1px solid #a19f9d; border-radius: 2px; display: flex; align-items: center;
      padding-left: 13px; gap: 17px; font-size: 16px; }
    .filters hr { border: 0; height: 1px; margin: 5px 0 0; background: #a8a6a4; }
    .fhead { margin: 21px 16px 0 10px; height: 20px; display: flex; justify-content: space-between; }
    .fbox { margin: 11px 0 0 10px; width: 230px; height: 57px; border: 1px solid #bebbb8; border-radius: 2px; display: flex; align-items: center; justify-content: center; padding-top: 1px; }
    .fhead.two { margin-top: 34px; }
    .dots { margin-top: 12px; }

    .tabs { display: flex; height: 44px; }
    .modes { width: 160px; border-right: 1px solid #a19f9d; display: flex; flex: none; padding-left: 13px; }
    .modes .desk { width: 30px; border-bottom: 3px solid #117865; height: 38px; padding: 9px 0 0 2px; }
    .modes .phone { margin: 6px 0 0 31px; }
    .modes .ar { margin: 17px 0 0 26px; }
    .modes .ar2 { margin: 17px 0 0 22px; }
    .pt { background: #fff; border-right: 1px solid #bebbb8; width: 95.330px; display: flex; justify-content: center; flex: none; padding-top: 13px; font-size: 14px; }
    .pt.cur { width: 96px; border-bottom: 5px solid #117865; font-weight: 600; position: relative; }
    .pt.cur .x { position: absolute; right: 5px; top: 4px; font-size: 11.500px; line-height: 16px; }
    .pt.rec { width: 161px; border-right: 0; padding-right: 1px; }
    .add { width: 49px; background: #117865; display: flex; justify-content: center; padding-top: 13px; flex: none; }

    .viz { width: 226px; flex: none; border-left: 1px solid #d8d6d4; display: flex; flex-direction: column; }
    .viz .head { height: 49px; padding: 0 10px 0 10px; display: flex; align-items: center; justify-content: space-between; }
    .viz .build { height: 17px; line-height: 17px; padding-left: 10px; font-weight: 500; -webkit-text-stroke: .2px #252423; }
    .modesel { margin: 6px 0 0 10px; display: flex; gap: 48px; height: 40px; }
    .modesel .sel { width: 40px; height: 40px; background: #d2d0ce; border-radius: 2px; padding: 5px; }
    .modesel .fmt { padding-top: 5px; }
    .grid { display: grid; grid-template-columns: repeat(6, 35px); grid-auto-rows: 35px; padding: 14px 0 0 14px; }
    .moredots { margin: 8px 0 23px 17px; }
    .viz hr { border: 0; height: 1px; background: #d8d6d4; margin: 0; }
    .vlabel { padding-left: 15px; height: 20px; display: flex; }
    .vlabel.first { margin: 11px 0 6px; }
    .well { margin-left: 5px; width: 213px; height: 35px; border: 1px dashed #c0bebc; border-radius: 2px; background: #fff; display: flex; align-items: center; padding-left: 12px; }
    .vlabel.drill { margin: 14px 0 11px; color: #484644; font-weight: 500; -webkit-text-stroke: .2px #484644; }
    .tog { padding: 0 27px 0 15px; display: flex; justify-content: space-between; height: 20px; margin-bottom: 14px; }
    .pill { width: 40px; height: 20px; border-radius: 10px; border: 1px solid #797775; background: #fff; display: flex; align-items: center; gap: 3px; padding-left: 5px; font-size: 10.800px; line-height: 18px; color: #797775; }
    .pill::before { content: ""; width: 10px; height: 10px; border-radius: 5px; background: #605e5c; }
    .pill.on { background: #117865; border-color: #117865; color: #fff; }
    .pill.on::before { order: 2; background: #fff; }
    .pill fit-text { padding-top: 1px; }
    .well.last { height: 32px; margin-top: -1px; padding: 1px 0 0 10px; }

    .data { width: 226px; flex: none; border-left: 1px solid #d8d6d4; }
    .data .head { height: 49px; padding: 0 10px 0 10px; display: flex; align-items: center; justify-content: space-between; }
    .dsearch { margin: 8px 0 0 5px; width: 215px; height: 30px; background: #fff; border: 1px solid #d1d1d1; border-bottom-color: #616161; border-radius: 4px;
      display: flex; align-items: center; padding-left: 15px; gap: 9px; font-size: 16px; color: #707070; }
    .dsearch fit-text { padding-top: 2px; }
    .tree { margin: 16px 0 0 19px; display: flex; align-items: center; }
    .tree fit-text { padding-top: 1px; }
    .tree .tb { margin: 0 7px 0 9px; }

    .status { height: 29px; flex: none; border-top: 1px solid #d8d6d4; display: flex; align-items: center; padding: 1px 22px 0 5px; color: #484644; font-size: 14px; }
    .status .pg { padding-top: 1px; }
    .status .zoom { margin-left: auto; }
    .status .pct { margin: 0 24px 0 16px; color: #605e5c; padding-bottom: 2px; }

    .taskbar { height: 61px; flex: none; background: #1d2224; border-top: 1px solid #000; box-shadow: inset 0 1px #44484a; display: flex; color: #fff; }
    .weather { width: 398px; padding: 0 0 0 28px; display: flex; flex: none; }
    .weather .wi { margin-top: 8px; }
    .weather .wt { margin: 9px 0 0 7px; font-size: 13.500px; line-height: 20px; }
    .weather .ar { color: #b9bbbc; font-family: "DejaVu Sans", "Noto Sans", sans-serif; font-size: 13.800px; direction: rtl; padding-top: 1px; }
    .start { margin: 16px 17px 0 0; }
    .tsearch { width: 275px; height: 40px; margin: 10px 2.500px 0 0; border-radius: 20px; background: #3a3e40; border: 1px solid #4b4f51; display: flex; align-items: center;
      padding-left: 14px; flex: none; font-size: 15.500px; color: #e0e1e1; }
    .tsearch fit-text { margin: 1px 110px 0 12px; }
    .app { width: 55px; flex: none; display: flex; flex-direction: column; align-items: center; padding-top: 15px; }
    .app i { width: 8px; height: 4px; border-radius: 2px; margin-top: 5px; background: #9a9c9d; }
    .app.on { margin: 5px 2.500px 5px; width: 50px; padding-top: 10px; background: #2d3134; border-radius: 5px; box-shadow: inset 0 0 0 1px #373b3e; }
    .app.on i { width: 20px; background: #4cb8f5; }
    .tray { margin-left: 71.500px; display: flex; align-items: center; }
    .cell { display: flex; justify-content: center; flex: none; width: 40px; }
    .eng { width: 58px; font-size: 14px; padding: 1px 2px 0 0; }
    .thirty { width: 30px; }
    .tray .thirty:nth-child(5) { margin-left: 2px; }
    .clock { width: 92px; display: flex; flex-direction: column; align-items: flex-end; font-size: 13.500px; line-height: 20px; padding-bottom: 2px; }
    .fifty { width: 50px; }

    .mark { position: absolute; left: 840px; top: 940px; z-index: 5; fill: #b4b4b4; opacity: .42; pointer-events: none; }
    .mark .arabic { font: 700 72px "DejaVu Sans", sans-serif; stroke: #b4b4b4; stroke-width: 2.500px; stroke-linejoin: round; }
    .mark .latin { font: 700 36px "Open Sans", sans-serif; }
  `;

  private item(i: Item) {
    return html`<div class="item ${i.off ? "off" : ""}" style="width:${i.w}px">
      ${icon(40, 40, ri[i.k])}
      ${i.l.map(([s, w], n) => html`<div class="line ${n ? "" : "first"} ${n && i.more && s ? `drop ${i.k}` : ""}">${s ? t(s, w) : nothing}${n && i.more ? chev() : nothing}</div>`)}
    </div>`;
  }

  private titleBar() {
    return html`<div class="title">
      ${icon(19, 19, svg`${p("M1 1H18V18H4L1 15Z", "#fff", "none", 1.5)}${p("M4.500 1V8.500H14.500V1M5.500 18V12H13.500V18M8.500 15V18", "#fff", "none", 1.4)}`)}
      ${icon(17, 18, p("M.8 0V7H8M1.500 6.500C5 1 12 0 15 4.500C17.500 9 13 13 7 18", "#797775", "none", 1.3), "undo")}
      ${icon(17, 18, p("M16.200 0V7H9M15.500 6.500C12 1 5 0 2 4.500C-.5 9 4 13 10 18", "#797775", "none", 1.3), "redo")}
      <div class="name">${t("churn out • Last saved: 7/28/2024 at 4:52 PM", 298)}</div>
      ${icon(11, 6, svg`<path d="M0 0H11L5.500 6Z" fill="#fff"/>`, "tri")}
      <div class="topsearch">${lens(20, "#323130")}${t("Search", 52)}</div>
      <div class="signin">${t("Sign in", 46)}</div>
      ${icon(25, 25, svg`${c(12.5, 12.5, 12.5, "#fff")}${c(12.5, 7, 3.8, "none", "#1a1a1a", 1.7)}${p("M5.500 13H19.500C19.500 24 5.500 24 5.500 13Z", "#1a1a1a", "none", 1.8)}`, "user")}
      ${icon(13, 13, p("M0 7.500H13", "#fff", "none", 1.2), "min")}
      ${icon(13, 13, svg`<rect x=".6" y="1.200" width="12" height="12.500" rx="1.500" fill="none" stroke="#fff" stroke-width="1.200"/>`, "max")}
      ${icon(13, 13, p("M.5 1.500L12.500 13.500M12.500 1.500L.5 13.500", "#fff", "none", 1.2), "close")}
    </div>`;
  }

  private ribbon() {
    const tabs: [string, number][] = [["File", 26], ["Home", 48], ["Insert", 43], ["Modeling", 73], ["View", 36], ["Optimize", 69], ["Help", 35]];
    return html`<div class="ribbon">
      <div class="menu">
        ${tabs.map(([s, w]) => html`<div class="tab ${s === "Home" ? "cur" : ""}">${t(s, w)}</div>`)}
        <div class="share">
          ${icon(19, 19, svg`${p("M6 4.500H1V18H15V14.500", "#fff", "none", 1.5)}${p("M12 1L18.500 6.500L12 12V8.500Q7 8 4.500 13.500Q5 5 12 4.500Z", "#fff", "none", 1.4)}`)}
          ${t("Share", 37)}${icon(12, 8, p("M.5 1L6 6.500L11.500 1", "#fff", "none", 1.5))}
        </div>
      </div>
      <div class="groups">
        <div class="group clip">
          <div class="items">
            <div class="item">
              ${icon(34, 40, svg`${p("M9 6H3.500V36H16M24 6H28V15", "#f0d3a4", "none", 3)}${p("M8.500 9V5.500H12.500C12.500 2 18.500 2 18.500 5.500H23V9Z", "#c8c6c4", W, 1.5)}${r(19, 17, 17, 22, "#fff", "#c0bebc", 1.6)}`)}
              <div class="line first">${t("Paste", 34)}</div>
            </div>
            <div class="col">
              <div class="row">${icon(20, 20, svg`${p("M7 1L14.500 15M15 1L7.500 15", "#b8b5b2", "none", 1.5)}${c(6.5, 17.5, 2.5, "none", "#a9cdea", 1.5)}${c(15.5, 17.5, 2.5, "none", "#a9cdea", 1.5)}`)}${t("Cut", 23)}</div>
              <div class="row">${icon(20, 20, svg`${p("M8 17H1V1H7L9.500 3.500", "#bebbb8", "none", 1.4)}${p("M8.500 4.500H14.500L19.500 9.500V19.500H8.500ZM14.500 4.500V9.500H19.500M11 12.500H17M11 15.500H17", "#bebbb8", W, 1.3)}`)}${t("Copy", 34)}</div>
              <div class="row">${icon(20, 20, svg`${p("M1 10L9 5.500L14.500 11.500L10 19Z", "#f0cfa0", "#fdf3e3", 1.6)}${p("M7 5L9.500 2.500L17 10L14 12.500ZM12.500 5L17.500 .5L19.500 2.500L15.500 8", "#bebbb8", W, 1.4)}`)}${t("Format painter", 98)}</div>
            </div>
          </div>
          <div class="gname">${t("Clipboard", 54)}</div>
        </div>
        <div class="sep"></div>
        ${groups.map((q) => html`<div class="group" style="width:${q.w}px">
          <div class="items">${q.items.map((i) => this.item(i))}</div>
          <div class="gname">${t(q.name, q.nw)}</div></div><div class="sep"></div>`)}
        ${icon(11, 8, p("M1 7L5.500 1.500L10 7", "#252423", "none", 2), "collapse")}
      </div>
    </div>`;
  }

  private chart() {
    const bars: [string, number, number][] = [["Monthly", 180.5, 185], ["Annual", 331, 85], ["Quarterly", 481.5, 85]];
    const lw = [41, 34, 46];
    return html`<svg class="chart" width="620" height="235" viewBox="51 282 620 235">
      ${[293, 385.5, 477.5].map((y) => svg`<path d="M120 ${y}H662" stroke="#c8c6c4" stroke-width="1" stroke-dasharray="1.500 3.500"/>`)}
      ${["100%", "50%", "0%"].map((s, i) => svg`<text x="111.500" y=${297 + i * 92} text-anchor="end" class="ax" textLength=${[26, 20.5, 15][i]}>${s}</text>`)}
      ${bars.map(([s, x, h], i) => svg`<rect x=${x} y=${477.3 - h} width="114.500" height=${h} fill="#118dff"/><text x=${x + 60.5} y="492" text-anchor="middle" class="ax" textLength=${lw[i]}>${s}</text>`)}
      <text x="392" y="509.500" text-anchor="middle" class="at" textLength="144">Contract Length (groups)</text>
      <text transform="translate(76 385) rotate(-90)" text-anchor="middle" class="at" textLength="61">churn rate</text>
    </svg>`;
  }

  private dots() {
    return icon(14, 3, svg`<path d="M0 0h1.500v2H0zM6 0h1.500v2H6zM12 0h1.500v2h-1.500z" fill="#484644"/>`, "dots");
  }

  render() {
    const pages = [1, 2, 3, 4, 5, 6];
    return html`
    ${this.titleBar()}${this.ribbon()}
    <div class="body">
      <div class="rail">
        <div class="cur">${icon(18, 18, svg`${p("M1 0V17H18", "#111", "none", 1.8)}<path d="M4 4.500h3V15H4zM9 7.500h3V15H9zM14 1.500h3V15h-3z" fill="#9a9897" stroke="#111" stroke-width="1.200"/>`)}</div>
        <div>${icon(23, 20, svg`${r(2, 1, 19, 17.5, "none", "#797774", 1.6)}${p("M2 4H21M2 9H21M2 13.800H21M8.500 4V18M15 4V18", "#797774", "none", 1.3)}`)}</div>
        <div>${icon(24, 24, svg`${r(1.5, 7, 8.5, 9, "none", "#797774", 1.5)}${r(13.5, 1, 9, 9, "none", "#797774", 1.5)}${r(13.5, 13.5, 9, 9, "none", "#797774", 1.5)}${p("M1.500 10H10M13.500 4H22.500M13.500 16.500H22.500M13.500 3.500H6.500V7M6.500 16V20H13.500", "#797774", "none", 1.4)}`)}</div>
        <div>${icon(22, 22, svg`${p("M5.500 12V1H13L18 6V17M12.500 1V7H18M19 9C21.500 11 21.500 17 18 21", "#797774", "none", 1.5)}<text x="-1.500" y="20.500" class="dax sans" textLength="17">DAX</text>`)}</div>
      </div>
      <div class="left">
        <div class="upper">
          <div class="canvas">
            <div class="cols">
              <div class="report">
                <h1>${t("How does contract length relate to churn?", 361)}</h1>
                <h2>${t("churn rate by Contract Length (groups)", 264)}</h2>
                ${this.chart()}
              </div>
              <div class="note"><div class="l">${t("Customers with ", 121)}<b>${t("Monthly", 67)}</b>${t(" contracts", 74)}</div><div class="l">${t("churn more", 87)}</div></div>
            </div>
            <div class="pageend"></div>
          </div>
          <div class="filters">
            <div class="head">
              ${icon(21, 19, p("M1 1H20V3L12.500 10.500V17.500H8.500V10.500L1 3Z", "#252423", "none", 1.5))}
              <h3>${t("Filters", 54)}</h3>
              ${icon(16, 11, svg`${p("M1 7C2 -.5 14 -.5 15 7", "#252423", "none", 1.4)}${c(8, 7.5, 2.2, "none", "#252423", 1.5)}`, "eye")}
              ${dblChev()}
            </div>
            <div class="fsearch">${lens(19, "#323130", 1.4)}${t("Search", 49)}</div>
            <hr>
            <div class="fhead">${t("Filters on this page", 125)}${this.dots()}</div>
            <div class="fbox">${t("Add data fields here", 133)}</div>
            <div class="fhead two">${t("Filters on all pages", 123)}${this.dots()}</div>
            <div class="fbox">${t("Add data fields here", 133)}</div>
          </div>
        </div>
        <div class="tabs">
          <div class="modes">
            <div class="desk">${icon(24, 18, svg`${r(0.7, 0.7, 22.6, 13, "#f8fbff", "#605e5c", 1.5)}${p("M12 14V17M7 17.200H17", "#605e5c", "none", 1.5)}`)}</div>
            ${icon(17, 25, svg`<rect x=".8" y=".8" width="15.400" height="23.400" rx="1" fill="#fff" stroke="#605e5c" stroke-width="1.500"/>${p("M7 20.500H10", "#605e5c", "none", 1.5)}`, "phone")}
            ${icon(6, 10, svg`<path d="M6 0V10L0 5Z" fill="#c0bebc"/>`, "ar")}
            ${icon(6, 10, svg`<path d="M0 0V10L6 5Z" fill="#c0bebc"/>`, "ar2")}
          </div>
          ${pages.map((n) => html`<div class="pt">${t(`Page ${n}`, 44)}</div>`)}
          <div class="pt cur">${t("Page 7", 45)}<span class="x">X</span></div>
          <div class="pt rec">${t("Recomendations", 110)}</div>
          <div class="add">${icon(14, 14, p("M7 0V14M0 7H14", "#fff", "none", 3.2))}</div>
        </div>
      </div>
      <div class="viz">
        <div class="head"><h3>${t("Visualizations", 124)}</h3>${dblChev()}</div>
        <div class="build">${t("Build visual", 77)}</div>
        <div class="modesel">
          <div class="sel">${icon(30, 30, svg`${p("M0 .8H24", "#252423", "none", 1.5)}${r(1, 7.5, 28, 8, "#117865")}${r(1, 21, 28, 8, "#117865")}<rect x=".8" y="7" width="28.500" height="8.800" fill="none" stroke="#252423" stroke-width="1.600" stroke-dasharray="2.500 1.500"/><rect x=".8" y="20.500" width="28.500" height="8.800" fill="none" stroke="#252423" stroke-width="1.600" stroke-dasharray="2.500 1.500"/>`)}</div>
          <div class="fmt">${icon(31, 30, svg`${p("M5.500 29H.8V.8H13L21.500 9.500V12M13 .8V9.500H21.500", "#252423", "none", 1.6)}${p("M30 11L22 19L16.500 24Q14 28.500 8.500 28.500Q11.500 27 11.500 24Q13 20.500 17 21L19 17.500L27.500 11.500ZM16.800 21L19.500 24", "#252423", "#f3f2f1", 1.4)}`)}</div>
        </div>
        ${icon(225, 16, p("M0 15.300H20L30 5.500L40 15.300H225", "#8a8886", "none", 1.2))}
        <div class="grid">${visuals.map((v) => icon(23, 23, v))}</div>
        ${icon(17, 3, svg`<path d="M0 0h2v2H0zM7.500 0h2v2h-2zM15 0h2v2h-2z" fill="#252423"/>`, "moredots")}
        <hr>
        <div class="vlabel first">${t("Values", 42)}</div>
        <div class="well">${t("Add data fields here", 133)}</div>
        <div class="vlabel drill">${t("Drill through", 87)}</div>
        <div class="tog">${t("Cross-report", 83)}<div class="pill">${t("Off", 16)}</div></div>
        <div class="tog">${t("Keep all filters", 92)}<div class="pill on">${t("On", 15)}</div></div>
        <div class="well last">${t("Add drill-through fields here", 188)}</div>
      </div>
      <div class="data">
        <div class="head"><h3>${t("Data", 42)}</h3>${dblChev()}</div>
        <div class="dsearch">${lensR(18, "#616161", 1.4)}${t("Search", 51)}</div>
        <div class="tree">
          ${icon(8, 14, p("M.5 .5L7 7L.5 13.500", "#484644", "none", 1.2))}
          ${icon(16, 16, svg`<rect x=".8" y=".8" width="14.400" height="14.400" rx="2.500" fill="none" stroke="#252423" stroke-width="1.500"/>${p("M5.500 1V15M10.500 1V15M1 5.500H15M1 10.500H15", "#252423", "none", 1.3)}`, "tb")}
          ${t("ChurnOut", 65)}
        </div>
      </div>
    </div>
    <div class="status">
      <div class="pg">${t("Page 7 of 8", 74)}</div>
      ${icon(154, 16, svg`${p("M0 8H6M144 8H154M149 3V13", "#605e5c", "none", 1.8)}${p("M12 8.500H137M74.500 5V12", "#605e5c", "none", 1.2)}${r(53, 2, 5, 13, "#605e5c")}`, "zoom")}
      <div class="pct">${t("73%", 28)}</div>
      ${icon(21, 16, svg`${r(0.8, 0.8, 19.4, 14.4, "none", "#605e5c", 1.6)}${p("M7 3.500H3.500V6.500M14 3.500H17.500V6.500M7 12.500H3.500V9.500M14 12.500H17.500V9.500", "#605e5c", "none", 1.4)}`)}
    </div>
    <div class="taskbar">
      <div class="weather">
        ${icon(30, 38, svg`<circle cx="12" cy="21" r="11.500" fill="#f0a51e"/><path d="M7 37Q0 36 1 31Q2 27 6 27Q8 20 14 20Q20 20 21 25Q27 26 26.500 31Q26 36 21 37Z" fill="#b9dcf6"/><path d="M7 37Q0 36 1 31Q12 36 26.500 30Q26 36 21 37Z" fill="#8fc0ea"/><circle cx="21" cy="10" r="10" fill="#ff99a4"/><text x="17.500" y="15" font-size="13" fill="#1b1b1b" class="sans">1</text>`, "wi")}
        <div class="wt"><div>${t("25°C", 32)}</div><div class="ar">مشمس جزئيًا</div></div>
      </div>
      ${icon(29, 29, svg`<defs><linearGradient id="w" x1="0" y1="0" x2="1" y2="1"><stop offset="0" stop-color="#6fe3fd"/><stop offset="1" stop-color="#0d86f0"/></linearGradient></defs><path d="M0 0H14V14H0ZM15 0H29V14H15ZM0 15H14V29H0ZM15 15H29V29H15Z" fill="url(#w)"/>`, "start")}
      <div class="tsearch">
        ${lensR(18, "#e6e6e6", 2)}${t("Search", 52)}
        ${icon(60, 30, svg`<path d="M4 14Q10 24 20 25Q28 20 34 26Q44 27 52 22M28 24Q34 14 48 10M40 26Q50 20 54 12" fill="none" stroke="#77762c" stroke-width="2"/>
          ${[[4, 13, 20], [9, 18, 60], [14, 22, -40], [20, 20, 70], [25, 25, -60], [31, 20, 60], [35, 14, -20], [41, 17, -70], [46, 8, 80], [47, 15, 60], [53, 16, -60], [55, 23, 50], [43, 23, -40], [50, 26, 60], [36, 27, 70], [19, 27, 60], [12, 14, -30], [30, 27, -70]].map(([x, y, a], i) => svg`<ellipse cx=${x} cy=${y} rx="4.600" ry="1.900" transform="rotate(${a} ${x} ${y})" fill=${["#d9b82e", "#7f9636", "#b9b03a", "#c7962a"][i % 4]}/>`)}
          <path d="M13 3Q20 6 27 5Q31 4 35 2Q34 8 28 10L18 11Q22 9 19 7Z" fill="#5aa4dc"/>`)}
      </div>
      ${apps.map((a) => html`<div class="app ${a.on ? "on" : ""}">${icon(30, 30, a.i)}${a.run || a.on ? html`<i></i>` : nothing}</div>`)}
      <div class="tray">
        <div class="cell">${icon(14, 9, p("M1 8L7 1.500L13 8", "#fff", "none", 1.8))}</div>
        <div class="cell">${icon(20, 17, svg`<path d="M4 13Q-1 12 0 8Q1 5 4 5Q6 0 11 1Q16 2 16 7Q19 8 17 12Z" fill="#bfc1c2"/><path d="M6 2Q12 -2 16 4L16 8L10 9Z" fill="#8a8d8f"/><circle cx="14.500" cy="11.500" r="5.800" fill="#fff"/>${p("M11 11A3.500 3.500 0 0 1 17.500 10M18 7.500V10.500H15.500M18 12.500A3.500 3.500 0 0 1 11.500 13M11 15.500V12.500H13.500", "#1a78c8", "none", 1.3)}`)}</div>
        <div class="cell">${icon(20, 20, svg`${p("M1 10A9 9 0 0 1 17 5M18 0V5.500H12.500M1 12A9 9 0 0 0 9 19M6 14.500H2V19.500", "#e8e8e8", "none", 1.5)}${c(15.5, 14.5, 5, "#f5990f")}`)}</div>
        <div class="cell eng">${t("ENG", 29)}</div>
        <div class="cell thirty">${icon(20, 16, svg`${p("M1 6A12.500 12.500 0 0 1 19 6M4 9A8.500 8.500 0 0 1 16 9M7 12A4.500 4.500 0 0 1 13 12", "#fff", "none", 1.5)}${c(10, 14, 1.7, "#fff")}`)}</div>
        <div class="cell thirty">${icon(20, 16, p("M1 5.500H4.500L9 1.500V14.500L4.500 10.500H1ZM12 5.500Q14 8 12 10.500M14.500 3.500Q17.500 8 14.500 12.500M16.800 1Q21.500 8 16.800 15", "#fff", "none", 1.4))}</div>
        <div class="cell thirty">${icon(20, 14, svg`<rect x=".8" y=".8" width="16.400" height="12.400" rx="2.500" fill="none" stroke="#fff" stroke-width="1.500"/><rect x="3" y="3" width="10" height="8" rx="1" fill="#fff"/><path d="M19 4.500V9.500" stroke="#fff" stroke-width="2"/>`)}</div>
        <div class="clock">${t("4:12 PM", 54)}${t("11/13/2024", 77)}</div>
        <div class="cell">${icon(17, 20, svg`<path d="M0 15.500L2 12.500V7.500Q2.500 1 8.500 1Q14.500 1.500 14.500 8V12.500L16.500 15.500ZM5.500 17H11Q8.300 20.800 5.500 17Z" fill="#fff"/><path d="M5.500 6.500H10L5.500 12H10" fill="none" stroke="#1d2224" stroke-width="1.500"/><path d="M11.500 .5H16L11.500 6.500H16.500" fill="none" stroke="#1d2224" stroke-width="4"/><path d="M11.500 .5H16L11.500 6.500H16.500" fill="none" stroke="#fff" stroke-width="1.500"/>`)}</div>
        <div class="cell fifty">${icon(30, 30, svg`<g transform="translate(1.500 0) scale(.7)">${copilot("t")}</g><rect x="8" y="19" width="21" height="10" rx="2" fill="#ffc21a"/><text x="10" y="27.200" font-size="8.500" font-weight="700" fill="#1b1b1b" class="sans" textLength="17">PRE</text>`)}</div>
      </div>
    </div>
    <svg class="mark" width="240" height="130" viewBox="0 0 240 130">
      <text x="120" y="63" text-anchor="middle" textLength="228" lengthAdjust="spacingAndGlyphs" class="arabic">مستقل</text>
      <text x="5" y="110" textLength="230" lengthAdjust="spacingAndGlyphs" class="latin">mostaql.com</text>
    </svg>`;
  }
}
